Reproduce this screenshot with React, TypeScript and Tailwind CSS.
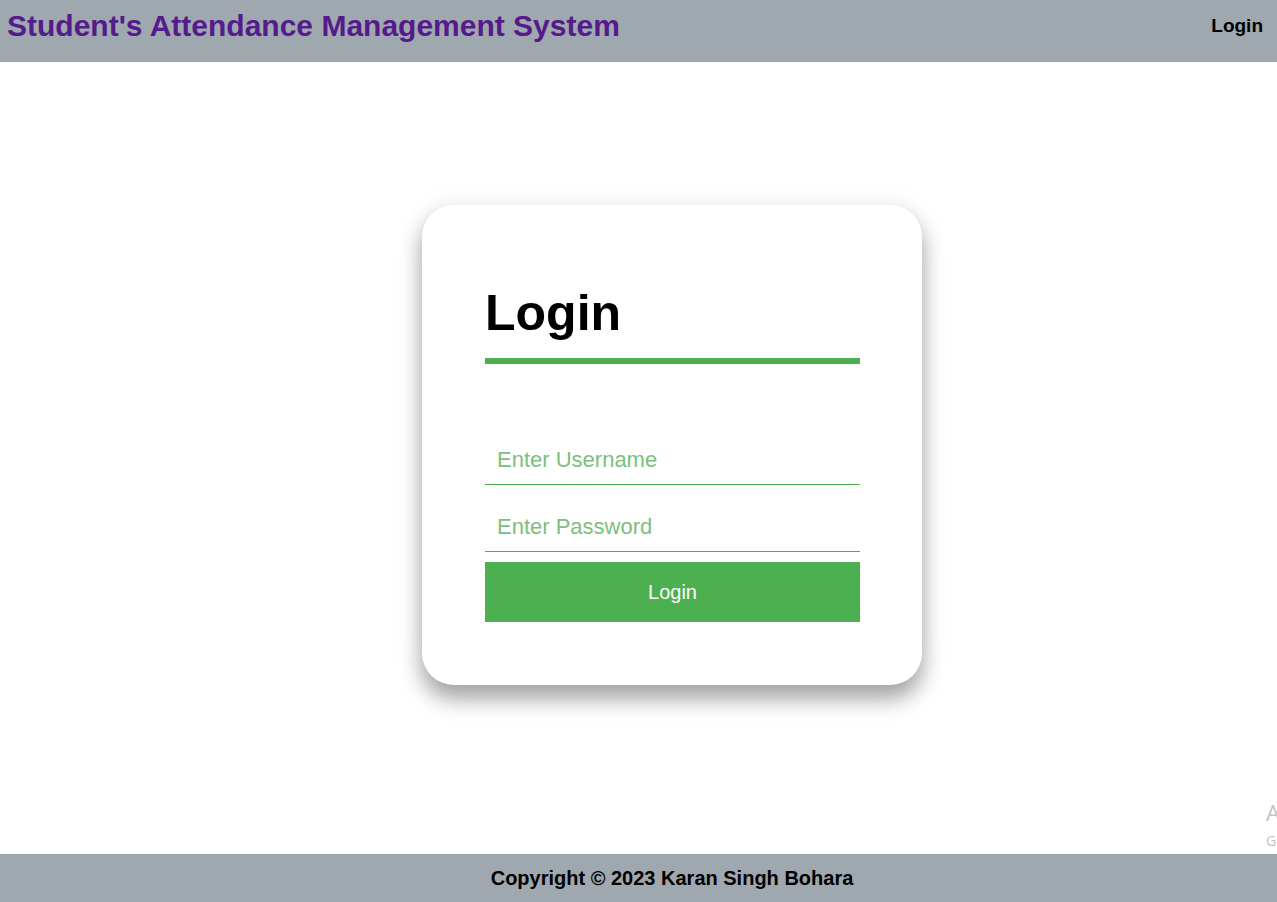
function Header() {
  return (
    <header className="h-[62px] bg-[#9fa8ae] flex items-start justify-between pl-[7px] pr-[14px]">
      <h1 className="mt-[9px] text-[30px] leading-[34px] font-bold text-[#551a8b]">
        Student's Attendance Management System
      </h1>
      <a className="mt-[15px] text-[19px] leading-[22px] font-bold text-black" href="#">
        Login
      </a>
    </header>
  );
}

function LoginCard() {
  return (
    <div className="w-[500px] bg-white rounded-[32px] pl-[63px] pr-[62px] pt-[63px] pb-[63px] shadow-[0_14px_22px_rgba(0,0,0,0.35),0_0_30px_rgba(0,0,0,0.06)]">
      <h2 className="mt-[16px] text-[50px] leading-[58px] font-bold text-black">Login</h2>
      <div className="mt-[16px] h-[6px] bg-[#4caf50]" />
      <form className="mt-[71px] flex flex-col" action="">
        <input
          className="h-[50px] w-full border-b border-[#4caf50] px-[12px] text-[22px] outline-none placeholder:text-[#7cbf7e]"
          placeholder="Enter Username"
          type="text"
        />
        <input
          className="mt-[17px] h-[50px] w-full border-b border-[#4caf50] px-[12px] text-[22px] outline-none placeholder:text-[#7cbf7e]"
          placeholder="Enter Password"
          type="password"
        />
        <button className="mt-[10px] h-[60px] w-full bg-[#4caf50] text-white text-[20px]" type="button">
          Login
        </button>
      </form>
    </div>
  );
}

export default function App() {
  return (
    <div className="relative min-h-screen flex flex-col overflow-hidden font-['Liberation_Sans',Arial,sans-serif]">
      <Header />
      <main className="flex-1 flex justify-center pl-[67px]">
        <div className="mt-[143px]">
          <LoginCard />
        </div>
      </main>
      <footer className="h-[48px] bg-[#9fa8ae] flex items-center justify-center pl-[67px]">
        <p className="text-[20px] font-bold text-black">Copyright © 2023 Karan Singh Bohara</p>
      </footer>
      <div className="absolute left-[1266px] top-[797px] whitespace-nowrap text-[#c4c4c4] font-['Open_Sans',sans-serif] pointer-events-none">
        <p className="text-[22px] leading-[30px]">Activate Windows</p>
        <p className="text-[14px] leading-[20px] mt-[4px]">Go to Settings to activate Windows.</p>
      </div>
    </div>
  );
}
